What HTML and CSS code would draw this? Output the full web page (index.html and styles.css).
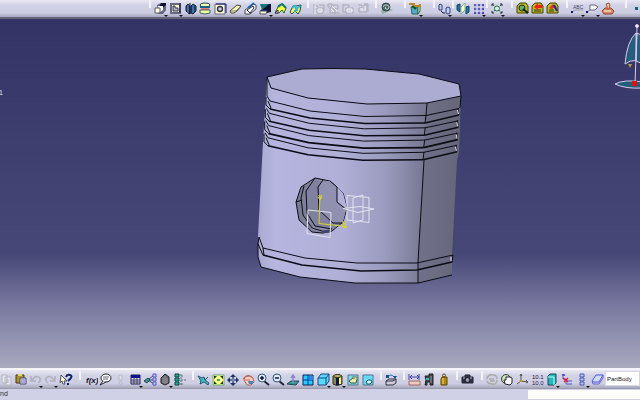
FILE: index.html
```html
<!DOCTYPE html>
<html lang="en">
<head>
    <meta charset="UTF-8">
    <meta name="viewport" content="width=device-width, initial-scale=1.0">
    <title>Part Design</title>
    <link rel="stylesheet" href="styles.css">
</head>
<body>
    <div class="toolbar toolbar-top">
        <div class="group">
            <button class="tool menu" aria-label="Pad"><svg viewBox="0 0 15 15"><path d="M4 4l4-2h5v7l-3 4H5z" fill="#668"/><path d="M8 2h5v2L7 9l-1-3z" fill="#113"/><path d="M5 5h5v4L6 12z" fill="#fff"/><path d="M2 7h5v5H2z" fill="#ffc" stroke="#557"/></svg></button>
            <button class="tool menu" aria-label="Pocket"><svg viewBox="0 0 15 15"><path d="M3 3h9v9H3z" fill="#ffc" stroke="#668" stroke-width="2"/><path d="M12 2v10" stroke="#114"/><path d="M5 5v5h5V7H7V5z" fill="#bbc" stroke="#335"/></svg></button>
            <button class="tool" aria-label="Shaft"><svg viewBox="0 0 15 15"><path d="M3 5l2-2 2 2v8l-2-1-2-2zM8 5l2-2 3 2v5l-3 3-2-1z" fill="#247" stroke="#124"/><path d="M5 4v8M10 4v8" stroke="#69b"/><path d="M7 2v11" stroke="#112"/></svg></button>
            <button class="tool" aria-label="Groove"><svg viewBox="0 0 15 15"><ellipse cx="7" cy="4" rx="5" ry="2" fill="#ffa" stroke="#146"/><path d="M2 5h10v2H2z" fill="#168"/><path d="M3 7h8v2H3z" fill="#e76"/><path d="M2 9h10v3q-5 2-10 0z" fill="#ff9" stroke="#367"/></svg></button>
            <button class="tool" aria-label="Hole"><svg viewBox="0 0 15 15"><path d="M2 3h10v10H2z" fill="#ffc" stroke="#668"/><path d="M3 3h10v9" fill="none" stroke="#117"/><circle cx="7" cy="8" r="2.5" fill="#ccd" stroke="#335" stroke-width="1.4"/></svg></button>
            <button class="tool" aria-label="Rib"><svg viewBox="0 0 15 15"><path d="M2 10l7-6 4 1-4 5-3 2H3z" fill="#ffb" stroke="#443"/><path d="M3 10h5l4-4" fill="none" stroke="#776"/></svg></button>
            <button class="tool" aria-label="Slot"><svg viewBox="0 0 15 15"><path d="M2 9l8-6 3 1v4l-6 5H2z" fill="#ffd" stroke="#446"/><path d="M4 9l6-4 1 2-4 5z" fill="#fff" stroke="#225"/><path d="M5 7l6-5" stroke="#26a" stroke-width="2"/></svg></button>
            <button class="tool menu" aria-label="Stiffener"><svg viewBox="0 0 15 15"><path d="M2 10L9 3h4v8l-4 1H2z" fill="#113"/><path d="M2 3h9L4 9z" fill="#177"/><path d="M2 10h7l-1 3H2z" fill="#ffc" stroke="#557"/></svg></button>
            <button class="tool" aria-label="Multi-sections solid"><svg viewBox="0 0 15 15"><path d="M2 12l4-8 4-1 3 4-2 5-2-3-3 3z" fill="#ff4" stroke="#263"/><path d="M5 6l4-3 4 4" fill="none" stroke="#177" stroke-width="2"/><path d="M2 12h3v-3z" fill="#fff" stroke="#335"/></svg></button>
            <button class="tool" aria-label="Removed solid"><svg viewBox="0 0 15 15"><path d="M2 11l3-6h3l5-1-1 6-2 3-3-3-3 3z" fill="#fe5" stroke="#155"/><path d="M4 7l3-2 1 3 4-3M6 10l4-1" fill="none" stroke="#3bd" stroke-width="2"/></svg></button>
        </div>
        <div class="group">
            <button class="tool" disabled aria-label="Fillet"><svg viewBox="0 0 15 15"><path d="M3 3v9M3 5h4M3 8h3M6 7h6v5H6zM8 4h5v6" fill="none" stroke="#a9a9b4"/><path d="M4 4v9M7 8h4v3H7z" fill="none" stroke="#f0f0f5"/></svg></button>
            <button class="tool" disabled aria-label="Chamfer"><svg viewBox="0 0 15 15"><path d="M2 3h4v3H2zM4 7v5h5M7 4h5v4H7zM9 8v4h4" fill="none" stroke="#a9a9b4"/><path d="M6 5l5 5M5 8l3 3" stroke="#f0f0f5"/></svg></button>
            <button class="tool" disabled aria-label="Draft"><svg viewBox="0 0 15 15"><path d="M2 3v8h3M2 4h6v3H5v5h7V7H9" fill="none" stroke="#a9a9b4"/><path d="M6 8h5v3H6z" fill="none" stroke="#f0f0f5"/></svg></button>
            <button class="tool" disabled aria-label="Shell"><svg viewBox="0 0 15 15"><path d="M2 4h4v3H3v4h8V4H8v6M8 3h4v8" fill="none" stroke="#a9a9b4"/><path d="M4 8h3v2M9 5v5" fill="none" stroke="#f0f0f5"/></svg></button>
        </div>
        <div class="group wide">
            <button class="tool" aria-label="Update"><svg viewBox="0 0 15 15"><path d="M2 9l9-1 3 1-11 4z" fill="#8cb0a4"/><circle cx="7" cy="6" r="4" fill="#566" stroke="#344"/><path d="M4 6q1-3 4-2t2 3-3 1 0-2" fill="none" stroke="#bcc"/></svg></button>
        </div>
        <div class="group wide">
            <button class="tool menu" aria-label="Insert body"><svg viewBox="0 0 15 15"><path d="M3 6h7v7H4z" fill="#5ac" stroke="#266"/><path d="M10 6l2-2v6l-2 3z" fill="#ffa" stroke="#264"/><path d="M1 3h5v2h6V3" fill="none" stroke="#b82" stroke-width="2"/><path d="M4 5l4 3" stroke="#052" stroke-width="2"/></svg></button>
        </div>
        <div class="group tight">
            <button class="tool menu" aria-label="Translate"><svg viewBox="0 0 15 15"><path d="M2 4l1-1 2 1v5H2zM9 7l2-1 2 1v5l-2 1-2-1z" fill="#bcf" stroke="#347"/><path d="M4 10l2 2h2" fill="none" stroke="#113"/></svg></button>
        </div>
        <div class="group tight">
            <button class="tool" aria-label="Mirror"><svg viewBox="0 0 15 15"><path d="M1 4l3-1v8l-3-2zM10 6l3-1v6l-3 2z" fill="#279" stroke="#146"/><path d="M5 6l4-4v7l-4 4z" fill="#ffb" stroke="#7aa"/></svg></button>
            <button class="tool menu" aria-label="Rectangular pattern"><svg viewBox="0 0 15 15"><path d="M3 3h2v2H3zM7 3h2v2H7zM11 3h2v2h-2zM3 7h2v2H3zM7 7h2v2H7zM11 7h2v2h-2zM3 11h2v2H3zM7 11h2v2H7zM11 11h2v2h-2z" fill="#33b"/><path d="M4 3v9M8 3v9M12 3v9M3 4h9M3 8h9M3 12h9" stroke="#88c" stroke-width=".6"/></svg></button>
        </div>
        <div class="group mid">
            <button class="tool menu" aria-label="Scaling"><svg viewBox="0 0 15 15"><path d="M2 3l10 9M12 3L2 12" stroke="#355" stroke-dasharray="3 1"/><circle cx="7" cy="7.500" r="2.500" fill="#ded" stroke="#275"/><path d="M2 5V3h2M10 3h2v2M2 10v2h2M10 12h2v-2" fill="none" stroke="#234"/></svg></button>
        </div>
        <div class="group mid">
            <button class="tool" aria-label="Apply material"><svg viewBox="0 0 15 15"><path d="M2 5l3-3h6l2 3v7H2z" fill="#bb2" stroke="#440"/><circle cx="7" cy="7" r="3" fill="#6a7" stroke="#230"/><path d="M8 8l5 4" stroke="#120" stroke-width="2"/></svg></button>
            <button class="tool" aria-label="Add"><svg viewBox="0 0 15 15"><path d="M2 5l3-3h6l2 3v7H2z" fill="#bb2" stroke="#440"/><path d="M4 11V8h7v3z" fill="#772"/><path d="M4 6l4-4v2h4v3H8v2z" fill="#e21"/></svg></button>
            <button class="tool" aria-label="Remove"><svg viewBox="0 0 15 15"><path d="M2 5l3-3h6l2 3v7H2z" fill="#bb2" stroke="#440"/><path d="M4 11V8h5v3z" fill="#772"/><path d="M4 7l4-4 2 3-3 2z" fill="#d32"/><path d="M9 4l3 6" stroke="#22a" stroke-width="2"/></svg></button>
        </div>
        <div class="group wide">
            <button class="tool menu" aria-label="Text with leader"><svg viewBox="0 0 15 15"><text x="3" y="8" class="icon-text">ABC</text><path d="M2 11l3-2h8" fill="none" stroke="#99a"/><path d="M1 10h2v2H1z" fill="#117"/></svg></button>
            <button class="tool menu" aria-label="Flag note"><svg viewBox="0 0 15 15"><path d="M5 4h5l3 2-3 3H5z" fill="#fff" stroke="#668"/><path d="M2 11l3-2" stroke="#889"/><path d="M1 10h2v2H1z" fill="#117"/></svg></button>
            <button class="tool" aria-label="Stamp"><svg viewBox="0 0 15 15"><path d="M2 10l3-3h6l3 3-2 3H4z" fill="#d86" stroke="#843"/><path d="M7 8V5l-1-2 3-1 1 2-1 4z" fill="#fb8" stroke="#954"/><path d="M4 10h7" stroke="#ffd"/></svg></button>
        </div>
        <div class="group">
            <button class="tool" aria-label="Point"><svg viewBox="0 0 15 15"><path d="M6 6h3v3H6z" fill="#168"/></svg></button>
        </div>
    </div>

    <main class="viewport">
        <svg class="scene" viewBox="0 19 640 349" preserveAspectRatio="xMidYMid slice" role="img" aria-label="Piston model">
            <defs>
                <linearGradient id="side" gradientUnits="userSpaceOnUse" x1="258" y1="0" x2="427" y2="0">
                    <stop offset="0" stop-color="#a9a9d0"/>
                    <stop offset=".1" stop-color="#b5b5df"/>
                    <stop offset=".5" stop-color="#afafd7"/>
                    <stop offset=".75" stop-color="#9b9bbf"/>
                    <stop offset="1" stop-color="#75758f"/>
                </linearGradient>
                <linearGradient id="face" gradientUnits="userSpaceOnUse" x1="420" y1="0" x2="460" y2="0">
                    <stop offset="0" stop-color="#70708a"/>
                    <stop offset="1" stop-color="#666679"/>
                </linearGradient>
                <linearGradient id="bore" x1="0" y1="0" x2="1" y2="0">
                    <stop offset="0" stop-color="#77778f"/>
                    <stop offset=".5" stop-color="#8c8cab"/>
                    <stop offset="1" stop-color="#a8a8cf"/>
                </linearGradient>
                <g id="ring">
                    <path d="M267 96l3 5 40 10 55 5.500 61-1 33-7"/>
                    <path class="heavy" d="M270 109l40 9 55 5.500 60-.500"/>
                    <path class="heavy" d="M425 123l34-8"/>
                    <path d="M266 97v8l4 4 1-1-3-7M426 115l-1 8M458 108l1 7"/>
                    <path class="glint" d="M457.500 110l1 4"/>
                </g>
            </defs>

            <!-- piston body -->
            <path fill="url(#side)" d="M267 77l4 11 37 10 59 6 60-1-2 57-7 102v21h-63l-55-6-39-10-3-10v-20l5-95z"/>
            <path fill="url(#face)" d="M427 103l34-7-2 56-2 8-5 95v20l-34 8v-21l6-102z"/>
            <path class="edge" fill="#acacd3" d="M267 77l35-8 31-.500 32 .500 54 5 40 10 2 12-34 7-60 1-59-6-37-10z"/>
            <g class="edge">
                <path d="M267 77v19M427 103l-1 12M461 96l-1 12"/>
                <use href="#ring"/>
                <use href="#ring" x="-0.700" y="12.300"/>
                <use href="#ring" x="-1.300" y="24.600"/>
                <use href="#ring" x="-2" y="36.800"/>
                <path d="M424 160l-6 102v21"/>
                <path d="M259 237l4 11 42 10 52 5h60l36-8"/>
                <path class="heavy" d="M263 255l39 10 59 6 56-1 35-8"/>
                <path d="M259 237l-1 7v13l3 10 39 10 55 6h63l34-8M258 244l5 11M263 248l1 7M453 255l-1 7"/>
                <path class="glint" d="M451 257v4"/>
            </g>

            <!-- pin hole -->
            <path class="edge" fill="url(#bore)" d="M315 178l15 3 13 12 4 15-4 14-11 9-10 2-10-1-13-12-3-18 5-15z"/>
            <path fill="#8080a0" d="M315 179l7 3-3 5v22l14 14h8l-9 7-17-3-9-13v-24z"/>
            <path fill="#9090b0" d="M322 182l8-1 7 6v15l9 8-3 12-10 1-14-13v-23z"/>
            <path fill="#b0b0d8" d="M337 187l6 6 4 15-1 1-9-7z"/>
            <g class="edge">
                <path d="M315 178l-9 13 1 22 8 13 17 3M304 186l-3 12 2 17 9 13 10 3M323 180l-5 7 1 23 14 13h10M330 181l7 6v15l10 8M296 202l6-2"/>
                <path d="M322 232l8-1" stroke="#446" stroke-width="3"/>
            </g>

            <!-- reference planes -->
            <g class="plane">
                <path d="M308 210l23 2.500-1 25-23-4zM347 195.500l22 2v25l-22-2.500zM353 198l10-3v25l-10 3zM343 208.500l17-2 14 2.500-16 3.500z"/>
            </g>
            <g class="axis">
                <path d="M320 195l-1 28.500 27 3M318 197l2 3 2-3M343 224l4 3-4 1"/>
                <text x="318" y="199">V</text>
                <text x="342" y="225">H</text>
            </g>

            <!-- compass -->
            <g class="compass">
                <path d="M636 33q-9 8-11 31 5-4 11-3.500zM637 33l6 3v28l-7-3zM615 84q9-5 28-2v6q-18 1-28-4z"/>
                <path d="M637 27l-2 57"/>
                <circle cx="637" cy="26" r="1.500"/>
                <path class="gold" d="M628 64h4l-2 4z"/>
                <path class="red" d="M632 81h5v5h-5z"/>
            </g>
            <text class="tree-label" x="-1" y="95">1</text>
        </svg>
    </main>

    <div class="toolbar toolbar-bottom">
        <div class="group first mid">
            <button class="tool" disabled aria-label="Copy"><svg viewBox="0 0 15 15"><path d="M4 3h5v8H4zM7 5h6v8H7z" fill="#e6e6ee" stroke="#b4b4c0"/><path d="M8 8h3M8 10h3" stroke="#b4b4c0"/></svg></button>
            <button class="tool" aria-label="Paste"><svg viewBox="0 0 15 15"><path d="M3 3h8v8H3z" fill="#aa9233" stroke="#443a12"/><path d="M5 2h4v2H5z" fill="#dd6"/><path d="M7 6h6v6H7z" fill="#eef" stroke="#446"/><path d="M8 8h4M8 10h4" stroke="#66a"/></svg></button>
            <button class="tool menu" disabled aria-label="Undo"><svg viewBox="0 0 15 15"><path d="M3 4v5h5M4 8q4-6 8-2 1 3-2 5" fill="none" stroke="#b0b0be" stroke-width="1.500"/></svg></button>
            <button class="tool menu" disabled aria-label="Redo"><svg viewBox="0 0 15 15"><path d="M12 4v5H7M11 8Q7 2 3 6q-1 3 2 5" fill="none" stroke="#b0b0be" stroke-width="1.500"/></svg></button>
            <button class="tool" aria-label="What's this?"><svg viewBox="0 0 15 15"><path d="M3 3l6 6-3 0 1 3-2 0-1-3-2 2z" fill="#ffc" stroke="#456"/><path d="M8 5q1-3 4-2t0 4l-2 2M10 11v2" fill="none" stroke="#126" stroke-width="2"/></svg></button>
        </div>
        <div class="group">
            <button class="tool" aria-label="Formula"><svg viewBox="0 0 15 15"><text x="3" y="11" class="fx">f(x)</text></svg></button>
            <button class="tool" aria-label="Comment"><svg viewBox="0 0 15 15"><ellipse cx="8" cy="6" rx="5" ry="4" fill="#fff" stroke="#223"/><path d="M5 9l-3 4 6-3" fill="#fff" stroke="#223"/><path d="M5 5h6M5 7h5" stroke="#667"/></svg></button>
            <button class="tool" disabled aria-label="Check"><svg viewBox="0 0 15 15"><path d="M6 3h3v5H6zM6 10h3v2H6z" fill="#dde" stroke="#b8b8c8"/></svg></button>
            <button class="tool menu" aria-label="Design table"><svg viewBox="0 0 15 15"><path d="M3 3h9v9H3z" fill="#dde" stroke="#225"/><path d="M3 3h9v3H3z" fill="#118"/><path d="M6 6v6M9 6v6M3 8h9M3 10h9" stroke="#446"/></svg></button>
            <button class="tool" aria-label="Relations"><svg viewBox="0 0 15 15"><path d="M5 8l6-5M5 8h7M5 8l6 4" stroke="#347"/><path d="M1 9l4-3 2 2-3 3z" fill="#399" stroke="#245"/><path d="M10 2h3v3h-3zM10 6h3v3h-3zM10 10h3v3h-3z" fill="#ccf" stroke="#55c"/></svg></button>
            <button class="tool menu" aria-label="Lock parameters"><svg viewBox="0 0 15 15"><path d="M3 6l4-4 4 3v6l-4 2-4-2z" fill="#666" stroke="#222"/><path d="M5 6v5M7 4v8M9 6v5" stroke="#99a"/></svg></button>
            <button class="tool" aria-label="Structure"><svg viewBox="0 0 15 15"><path d="M2 2h4v3H2zM2 6h4v3H2zM2 10h4v3H2z" fill="#2a8" stroke="#144"/><path d="M8 2v11M8 4h3M8 8h5M8 12h3" stroke="#667" stroke-dasharray="2 1"/></svg></button>
        </div>
        <div class="group">
            <button class="tool" aria-label="Fly mode"><svg viewBox="0 0 15 15"><path d="M2 4l4 2 2-1 1 3 4 3-1 2-4-3-4 2 1-3z" fill="#4bb" stroke="#257"/><path d="M9 8l3-3" stroke="#245"/></svg></button>
            <button class="tool" aria-label="Fit all in"><svg viewBox="0 0 15 15"><path d="M2 3h11v10H2z" fill="#ff8" stroke="#6a7"/><path d="M3 4h3L3 7zM12 4H9l3 3zM3 12h3L3 9zM12 12H9l3-3z" fill="#132"/><path d="M6 7h3v2H6z" fill="#4a6"/></svg></button>
            <button class="tool" aria-label="Pan"><svg viewBox="0 0 15 15"><path d="M7 3v10M2 8h10" stroke="#236" stroke-width="2"/><path d="M7 2l3 3H4zM7 14l3-3H4zM1 8l3-3v6zM13 8l-3-3v6z" fill="#236"/><path d="M4 8h6M7 5v6" stroke="#9ac"/></svg></button>
            <button class="tool" aria-label="Rotate"><svg viewBox="0 0 15 15"><path d="M3 8l1-3 4-1 4 2 1 4-3 3H6z" fill="#fcb" stroke="#a66"/><path d="M2 7q4-6 9-2" fill="none" stroke="#a66"/><path d="M7 9h5v3H8z" fill="#48b"/><path d="M4 8h5" stroke="#c66"/></svg></button>
            <button class="tool" aria-label="Zoom in"><svg viewBox="0 0 15 15"><path d="M8 9l5 4" stroke="#223" stroke-width="2"/><circle cx="6" cy="6" r="4" fill="#def" stroke="#357"/><path d="M4 6h4M6 4v4" stroke="#114" stroke-width="1.500"/></svg></button>
            <button class="tool" aria-label="Zoom out"><svg viewBox="0 0 15 15"><path d="M8 9l5 4" stroke="#223" stroke-width="2"/><circle cx="6" cy="6" r="4" fill="#def" stroke="#357"/><path d="M4 6h4" stroke="#114" stroke-width="1.500"/></svg></button>
            <button class="tool" aria-label="Normal view"><svg viewBox="0 0 15 15"><path d="M1 12l4-3h8l-3 4z" fill="#399" stroke="#245"/><path d="M7 11V4M5 6l2-3 2 3" fill="none" stroke="#88c" stroke-width="1.500"/></svg></button>
            <button class="tool" aria-label="Multi view"><svg viewBox="0 0 15 15"><path d="M2 3h10v10H2z" fill="#2cf" stroke="#125"/><path d="M7 3v10M2 8h10" stroke="#139"/><path d="M8 4h4v4H8z" fill="#28e"/></svg></button>
            <button class="tool menu" aria-label="Isometric view"><svg viewBox="0 0 15 15"><path d="M2 6l3-4h8v7l-3 4H2z" fill="#5df" stroke="#248"/><path d="M2 6h8l3-4M10 6v7" fill="none" stroke="#248"/></svg></button>
            <button class="tool menu" aria-label="Shading with edges"><svg viewBox="0 0 15 15"><path d="M2 4q5-3 9 0v8q-5 3-9 0z" fill="#885" stroke="#331"/><path d="M5 5h3v8H5z" fill="#115"/><path d="M8 5h2v7H8z" fill="#ff6"/><ellipse cx="6.500" cy="4" rx="4" ry="1.500" fill="#bb8" stroke="#331"/></svg></button>
            <button class="tool" aria-label="Hide or show"><svg viewBox="0 0 15 15"><path d="M2 3h10v10H2z" fill="#7de" stroke="#578"/><path d="M3 9l4-3 4 1-1 4H5z" fill="#eea" stroke="#354"/><path d="M6 5h5v3" fill="#ee8" stroke="#676"/></svg></button>
            <button class="tool" aria-label="Swap visible space"><svg viewBox="0 0 15 15"><path d="M2 3h10v10H2z" fill="#6df" stroke="#578"/><path d="M5 10l2-2h3l1 2-2 2H6z" fill="#cff" stroke="#156"/></svg></button>
        </div>
        <div class="group">
            <button class="tool" aria-label="Print"><svg viewBox="0 0 15 15"><path d="M2 9l3-2h7v4l-3 2H2z" fill="#ccd" stroke="#334"/><path d="M2 9h7l3-2" fill="none" stroke="#334"/><path d="M4 5q3-4 6 0" fill="none" stroke="#26c"/><path d="M2 3h3v3H2zM9 4h4l-2 3z" fill="#158"/></svg></button>
        </div>
        <div class="group">
            <button class="tool" aria-label="Measure between"><svg viewBox="0 0 15 15"><path d="M2 9h11v4H2z" fill="#ecb" stroke="#a66"/><path d="M2 2v6M12 2v6M3 5h9M5 3L3 5l2 2M10 3l2 2-2 2" fill="none" stroke="#44a"/></svg></button>
            <button class="tool" aria-label="Measure item"><svg viewBox="0 0 15 15"><path d="M3 4h4V2h4v11H8v-3H5v3H3l1-5z" fill="#444" stroke="#222"/><path d="M4 6h3v2H4z" fill="#3bb"/><path d="M9 4v7" stroke="#99a"/></svg></button>
            <button class="tool" aria-label="Measure inertia"><svg viewBox="0 0 15 15"><path d="M5 5h5v8H4V7z" fill="#a81" stroke="#640"/><circle cx="7" cy="3.500" r="1.500" fill="none" stroke="#640"/><path d="M6 6v6" stroke="#fd6"/></svg></button>
        </div>
        <div class="group mid">
            <button class="tool" aria-label="Capture"><svg viewBox="0 0 15 15"><path d="M2 5h3V3h5v2h3v6H2z" fill="#334" stroke="#223"/><circle cx="7.500" cy="8" r="2.500" fill="#99a" stroke="#112"/><path d="M3 6h2M10 6h2" stroke="#bbc"/></svg></button>
        </div>
        <div class="group tight">
            <button class="tool" disabled aria-label="Update all"><svg viewBox="0 0 15 15"><path d="M2 7q1-5 6-4 4 0 4 4M12 8q0 5-5 4-4 0-5-3M4 7h5M5 9h5" fill="none" stroke="#aaa" stroke-width="1.500"/></svg></button>
            <button class="tool" aria-label="Manual update"><svg viewBox="0 0 15 15"><circle cx="6" cy="7" r="4.500" fill="#cdb" stroke="#343"/><path d="M5 12l-1-4 2 0V5h4l2 1v5l-2 2z" fill="#fff" stroke="#223"/></svg></button>
            <button class="tool" aria-label="Axis system"><svg viewBox="0 0 15 15"><path d="M6 9V2M6 9l7 1M6 9l-4 3M5 4l1-2 1 2M11 8l2 2-2 1" fill="none" stroke="#554"/><path d="M5 8h2v2H5z" fill="#b92"/></svg></button>
            <button class="tool" aria-label="Mean dimensions"><svg viewBox="0 0 15 15"><text x="2" y="7" class="digits">10.1</text><text x="2" y="13" class="digits">10.0</text></svg></button>
            <button class="tool menu" aria-label="Create datum"><svg viewBox="0 0 15 15"><path d="M3 4l2-2h6v9l-2 2H3z" fill="#2bb" stroke="#245"/><path d="M3 5h6v8" fill="none" stroke="#bff"/></svg></button>
            <button class="tool" aria-label="Only current body"><svg viewBox="0 0 15 15"><path d="M3 3v4h3v5h6M6 9h6" fill="none" stroke="#55c"/><path d="M2 2h3v2H2z" fill="#55d"/><path d="M3 6l5 4M8 6l-4 4" stroke="#d23" stroke-width="1.500"/></svg></button>
            <button class="tool menu" aria-label="Tree"><svg viewBox="0 0 15 15"><path d="M5 2h4v3H5zM5 6h4v3H5zM5 10h4v3H5z" fill="#acf" stroke="#55b"/></svg></button>
            <button class="tool" aria-label="Body"><svg viewBox="0 0 15 15"><path d="M2 9l4-6h7l-4 7H4z" fill="#cdf" stroke="#55d"/><path d="M2 9l1 3h6l4-6V3" fill="none" stroke="#66c"/></svg></button>
        </div>
        <select class="body-select" aria-label="Current body">
            <option>PartBody</option>
        </select>
    </div>

    <footer class="status">
        <label class="status-text" for="command">nd</label>
        <input class="command" id="command" type="text">
    </footer>
</body>
</html>
```
FILE: styles.css
```css
* {
    box-sizing: border-box;
}

body {
    margin: 0;
    height: 100vh;
    display: flex;
    flex-direction: column;
    overflow: hidden;
    font-family: "Liberation Sans", Arial, sans-serif;
    font-size: 7px;
    color: #333;
    background-color: #d0d0e6;
}

.toolbar {
    display: flex;
    align-items: stretch;
    flex: none;
    overflow: hidden;
    background: linear-gradient(#e9e9f4, #d2d2e6 30%, #cdcde3 75%, #a8a8bc);
}

.toolbar-top {
    height: 19px;
    padding-left: 149px;
    border-bottom: 2px solid #66667a;
}

.toolbar-bottom {
    height: 21px;
    padding-top: 1px;
    border-top: 2px solid #f4f4fa;
    border-bottom: 1px solid #9a9aac;
}

.group {
    display: flex;
    flex: none;
    align-items: center;
    padding: 0 4px 0 2px;
    border-left: 2px solid #f2f2f8;
    border-image: linear-gradient(#f2f2f8 50%, transparent 50%) 1;
}

.wide {
    padding-right: 10px;
}

.mid {
    padding-right: 6px;
}

.tight {
    padding-right: 0;
}

.first {
    margin-left: -2px;
    padding-left: 0;
    border: none;
}

.tool {
    position: relative;
    width: 15px;
    height: 15px;
    padding: 0;
    border: none;
    background: none;
}

.tool svg {
    display: block;
    width: 15px;
    height: 15px;
}

.menu::after {
    content: "";
    position: absolute;
    right: 0;
    bottom: -1px;
    border: 2px solid transparent;
    border-top-color: #111;
    border-bottom: none;
}

.icon-text {
    font-size: 5px;
    fill: #446;
}

.fx {
    font: italic bold 8px "Liberation Sans", sans-serif;
    fill: #112;
}

.digits {
    font-size: 6px;
    fill: #224;
}

.viewport {
    flex: 1;
    min-height: 0;
    background: linear-gradient(#333366, #474777 67%, #7878a0 82%, #a9a9bf);
}

.scene {
    display: block;
    width: 100%;
    height: 100%;
}

.edge {
    stroke: #0c0c14;
    stroke-width: 1;
    stroke-linejoin: round;
}

g.edge {
    fill: none;
}

.heavy {
    stroke-width: 1.6;
}

.glint {
    stroke: #e4e4f4;
}

.plane {
    fill: none;
    stroke: #e2e2ee;
    stroke-width: 1;
}

.axis {
    fill: none;
    stroke: #d6d624;
    stroke-width: 1;
}

.axis text {
    font-size: 6px;
    font-weight: bold;
    fill: #d6d624;
    stroke: none;
}

.compass {
    fill: #245e7c;
    stroke: #d9c8ec;
    stroke-width: 1;
}

.compass circle {
    fill: #fff;
}

.compass .gold {
    fill: #b99a3a;
    stroke: none;
}

.compass .red {
    fill: #e01010;
    stroke: none;
}

.tree-label {
    font-size: 7px;
    fill: #e6e6f4;
}

.body-select {
    flex: 1;
    min-width: 0;
    height: 15px;
    padding: 0 1px;
    border: 1px solid #d8d8e4;
    border-radius: 0;
    appearance: none;
    background-color: #fff;
    font-family: inherit;
    font-size: 6px;
    color: #222;
}

.status {
    display: flex;
    flex: none;
    height: 11px;
    background-color: #d0d0e6;
}

.status-text {
    flex: 1;
    line-height: 10px;
}

.command {
    width: 112px;
    height: 9px;
    margin-top: 1px;
    padding: 0;
    border: none;
    background-color: #fff;
}
```
